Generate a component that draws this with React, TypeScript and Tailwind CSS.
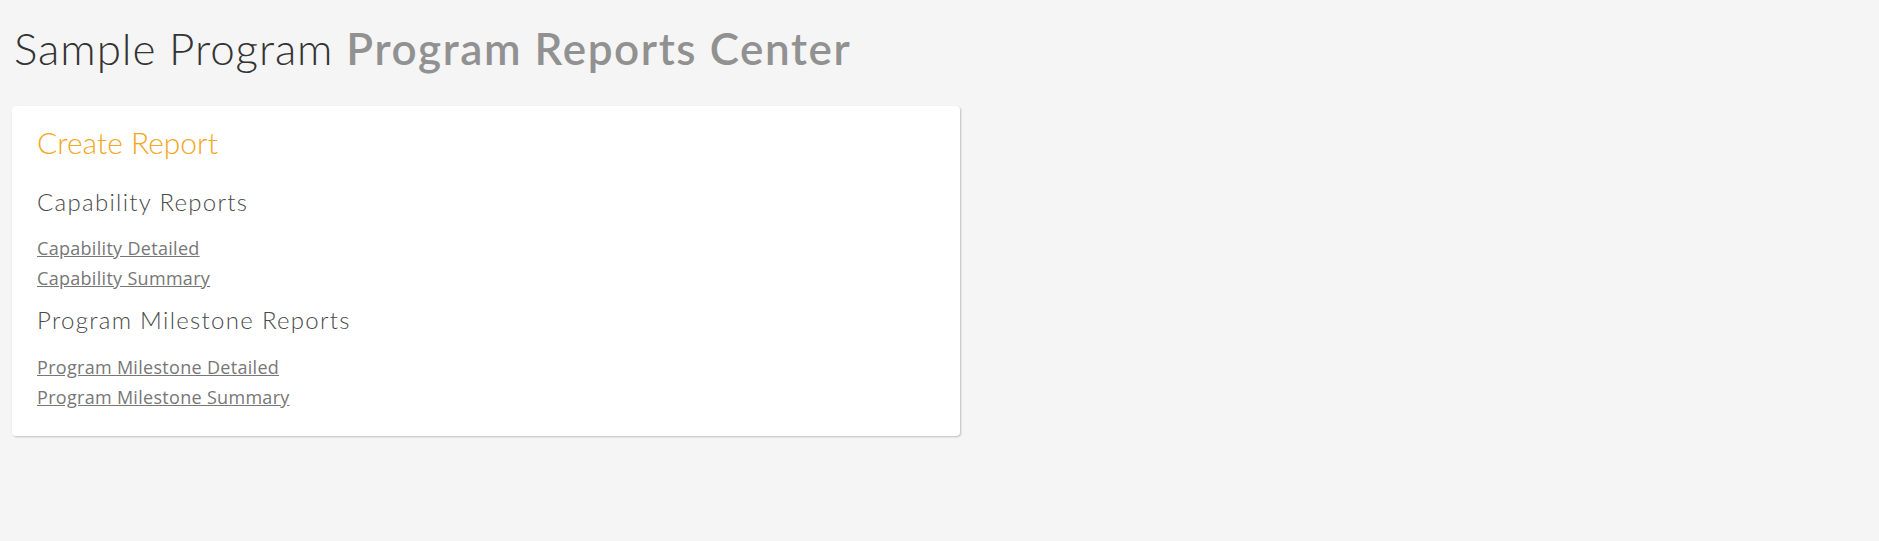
const reportGroups = [
  {
    title: "Capability Reports",
    links: ["Capability Detailed", "Capability Summary"],
  },
  {
    title: "Program Milestone Reports",
    links: ["Program Milestone Detailed", "Program Milestone Summary"],
  },
];

export default function App() {
  return (
    <div className="min-h-screen bg-[#f5f5f5] px-3 pt-[18px] font-['Lato',sans-serif]">
      {/* Page title */}
      <h1 className="pl-[2px] text-[44px] leading-[60px] font-light tracking-[0.9px] text-[#333333]">
        Sample Program{" "}
        <span className="font-semibold tracking-[1.6px] text-[#919191]">Program Reports Center</span>
      </h1>

      {/* Create report card */}
      <div className="mt-[28px] w-[948px] rounded bg-white px-[25px] pt-[18px] pb-[24px] shadow-[1px_1px_2px_rgba(0,0,0,0.22)]">
        <h2 className="text-[30px] leading-[36px] font-light text-[#f5a623]">Create Report</h2>

        {reportGroups.map((group, i) => (
          <div key={group.title} className={i === 0 ? "mt-[27px]" : "mt-[12px]"}>
            <h3 className="text-[24px] leading-[30px] font-light tracking-[1.3px] text-[#4a4a4a]">
              {group.title}
            </h3>
            <ul className={i === 0 ? "mt-[16px]" : "mt-[17px]"}>
              {group.links.map((link) => (
                <li key={link}>
                  <a
                    href="#"
                    className="font-['Open_Sans',sans-serif] text-[18px] leading-[30px] tracking-[0.3px] text-[#777777] underline"
                  >
                    {link}
                  </a>
                </li>
              ))}
            </ul>
          </div>
        ))}
      </div>
    </div>
  );
}
